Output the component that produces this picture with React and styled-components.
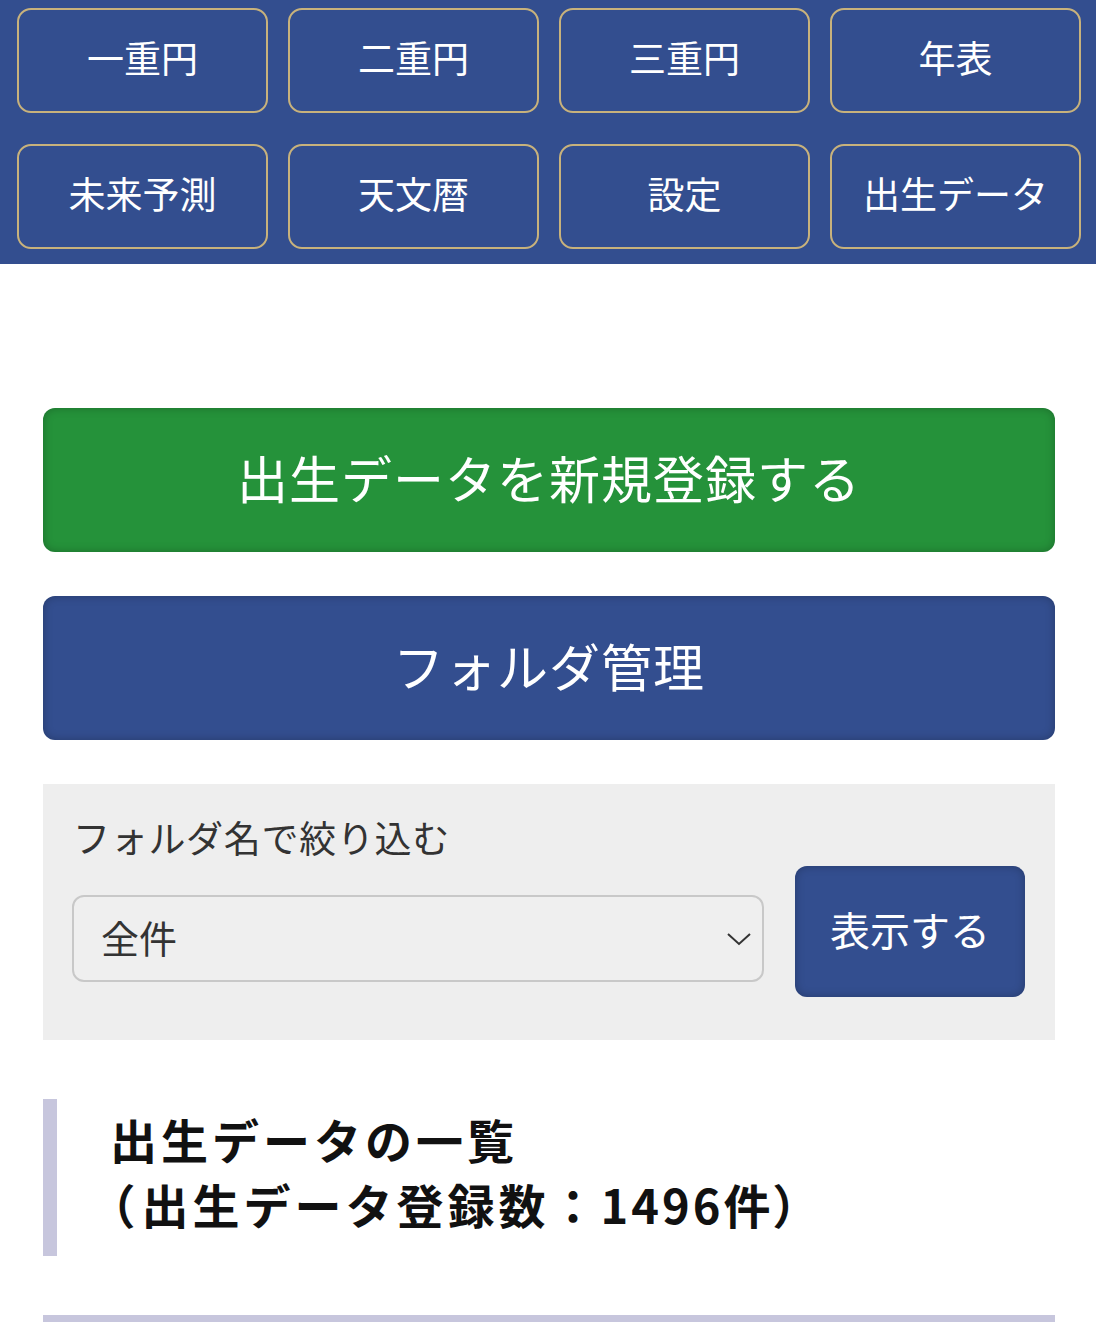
import styled, { createGlobalStyle } from "styled-components";

const GlobalStyle = createGlobalStyle`
    html, body {
        margin: 0;
        padding: 0;
        background: #ffffff;
        font-family: "Noto Sans CJK JP", "Noto Sans", sans-serif;
    }
`

const navItems = ["一重円", "二重円", "三重円", "年表", "未来予測", "天文暦", "設定", "出生データ"];

const App = () => {
    return (
        <>
            <GlobalStyle />
            <Nav>
                {navItems.map((label) => (
                    <NavButton key={label}>{label}</NavButton>
                ))}
            </Nav>

            <Main>
                <BigButton $color="#25923a">出生データを新規登録する</BigButton>
                <BigButton $color="#334e8f">フォルダ管理</BigButton>

                <Filter>
                    <FilterLabel>フォルダ名で絞り込む</FilterLabel>
                    <FilterRow>
                        <Select>
                            <span>全件</span>
                            <svg width="26" height="16" viewBox="0 0 26 16">
                                <path d="M2 3 L13 13 L24 3" fill="none" stroke="#333" strokeWidth="2" />
                            </svg>
                        </Select>
                        <ShowButton>表示する</ShowButton>
                    </FilterRow>
                </Filter>

                <Heading>
                    出生データの一覧<br />
                    <Tight>（</Tight>出生データ登録数：<Digits>1496</Digits>件<Tight>）</Tight>
                </Heading>

                <Divider />
            </Main>
        </>
    );
}

const Nav = styled.nav`
    background: #334e8f;
    display: grid;
    grid-template-columns: repeat(4, 1fr);
    gap: 31px 20px;
    padding: 8px 15px 15px 17px;
`

const NavButton = styled.div`
    height: 105px;
    box-sizing: border-box;
    border: 2px solid #c8b27c;
    border-radius: 14px;
    padding-bottom: 8px;
    display: flex;
    align-items: center;
    justify-content: center;
    color: #ffffff;
    font-size: 37px;
`

const Main = styled.main`
    padding: 144px 41px 0 43px;
    display: flex;
    flex-direction: column;
`

const BigButton = styled.div`
    height: 144px;
    box-sizing: border-box;
    padding-bottom: 7px;
    margin-bottom: 44px;
    border-radius: 12px;
    background: ${(p) => p.$color};
    box-shadow: inset 0 0 10px rgba(0, 0, 0, 0.25);
    display: flex;
    align-items: center;
    justify-content: center;
    color: #ffffff;
    font-size: 51px;
    letter-spacing: 1px;
`

const Filter = styled.section`
    background: #eeeeee;
    padding: 25px 30px 43px 29px;
    margin-bottom: 59px;
`

const FilterLabel = styled.div`
    font-size: 37px;
    line-height: 57px;
    letter-spacing: 0.7px;
    color: #333333;
    padding-left: 1px;
`

const FilterRow = styled.div`
    display: flex;
    align-items: flex-start;
    gap: 31px;
`

const Select = styled.div`
    flex: 1;
    height: 87px;
    margin-top: 29px;
    box-sizing: border-box;
    border: 2px solid #c8c8c8;
    border-radius: 12px;
    background: #efefef;
    display: flex;
    align-items: center;
    justify-content: space-between;
    padding: 0 10px 4px 27px;
    font-size: 38px;
    color: #333333;

    svg {
        margin-top: 4px;
    }
`

const ShowButton = styled.div`
    width: 230px;
    height: 131px;
    box-sizing: border-box;
    padding-bottom: 6px;
    border-radius: 12px;
    background: #334e8f;
    box-shadow: inset 0 0 10px rgba(0, 0, 0, 0.25);
    display: flex;
    align-items: center;
    justify-content: center;
    color: #ffffff;
    font-size: 40px;
`

const Heading = styled.h2`
    margin: 0;
    border-left: 14px solid #c7c6dd;
    padding: 7px 0 20px 53px;
    font-size: 47px;
    line-height: 65px;
    letter-spacing: 4px;
    font-weight: bold;
    color: #111111;
`

const Tight = styled.span`
    font-feature-settings: "palt";
    letter-spacing: 8px;
`

const Digits = styled.span`
    letter-spacing: 3px;
`

const Divider = styled.div`
    height: 8px;
    background: #c7c6dd;
    margin-top: 59px;
`

export default App;
